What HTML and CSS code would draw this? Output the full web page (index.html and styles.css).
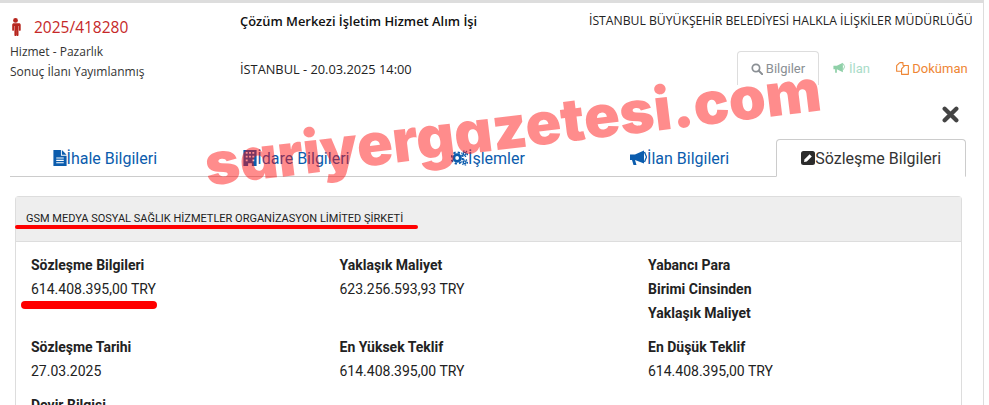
FILE: index.html
```html
<!DOCTYPE html>
<html lang="tr">
<head>
<meta charset="utf-8">
<title>2025/418280</title>
<link rel="stylesheet" href="styles.css">
</head>
<body>
<div class="frame">
  <header class="head">
    <div class="head-left">
      <div class="ikn">
        <svg class="person" viewBox="0 0 11 18"><circle cx="5.5" cy="2.4" r="2.4"/><path d="M2 5.2h7c1 0 1.7.7 1.7 1.7v5c0 .5-.4.9-.9.9s-.9-.4-.9-.9V8h-.4v9c0 .6-.4 1-1 1s-1-.4-1-1v-5h-.1v5c0 .6-.4 1-1 1s-1-.4-1-1V8h-.4v3.900c0 .5-.4.9-.9.9s-.9-.4-.9-.9v-5c0-1 .7-1.700 1.700-1.700z"/></svg>
        <span>2025/418280</span>
      </div>
      <div class="meta">Hizmet - Pazarlık</div>
      <div class="meta">Sonuç İlanı Yayımlanmış</div>
    </div>
    <div class="head-mid">
      <div class="title">Çözüm Merkezi İşletim Hizmet Alım İşi</div>
      <div class="place">İSTANBUL - 20.03.2025 14:00</div>
    </div>
    <div class="head-right">
      <div class="org">İSTANBUL BÜYÜKŞEHİR BELEDİYESİ HALKLA İLİŞKİLER MÜDÜRLÜĞÜ</div>
      <nav class="pills">
        <a class="pill pill-on">
          <svg class="pi" viewBox="0 0 14 14"><circle cx="5.800" cy="5.800" r="4.300" fill="none" stroke="currentColor" stroke-width="2"/><path d="M9 9l4 4" stroke="currentColor" stroke-width="2.400" stroke-linecap="round"/></svg>
          Bilgiler</a>
        <a class="pill pill-green">
          <svg class="pi" viewBox="0 0 15 14"><path d="M1 4.500h4l7-3.500v11L5 8.500v4H3v-4H1z" fill="#8fd0a8"/><path d="M12.500 2l1.500 3.500L12.500 9" fill="none" stroke="#8fd0a8"/></svg>
          İlan</a>
        <a class="pill pill-orange">
          <svg class="pi" viewBox="0 0 14 14"><path d="M4 .7h3.500v3M4 .7L.7 4v6H6M7.500 3.700h2L13.300 3.700v9.600H6V7.500l3.500-3.800" fill="none" stroke="currentColor" stroke-width="1.200" stroke-linejoin="round"/></svg>
          Doküman</a>
      </nav>
    </div>
  </header>

  <div class="close-row">
    <svg class="close" viewBox="0 0 16 16"><path d="M2.500 2.500l11 11M13.500 2.500l-11 11" stroke="#444" stroke-width="4" stroke-linecap="round"/></svg>
  </div>

  <nav class="tabs">
    <a class="tab">
      <svg class="ti" viewBox="0 0 14 17"><path d="M0 0h8v6h6v11H0z" fill="#0b5cad"/><path d="M9 0l5 5H9z" fill="#0b5cad"/><path d="M3 8.500h8M3 11h8M3 13.500h8" stroke="#fff" stroke-width="1.200"/></svg>İhale Bilgileri</a>
    <a class="tab">
      <svg class="ti" viewBox="0 0 14 17"><path d="M0 0h14v17H9v-3H5v3H0z" fill="#0b5cad"/><path d="M2.500 2h2v2h-2zM6 2h2v2H6zM9.500 2h2v2h-2zM2.500 6h2v2h-2zM6 6h2v2H6zM9.500 6h2v2h-2zM2.500 10h2v2h-2zM9.500 10h2v2h-2z" fill="#fff"/></svg>İdare Bilgileri</a>
    <a class="tab">
      <svg class="ti ti-w" viewBox="0 0 18 16"><g fill="none" stroke="#0b5cad"><circle cx="6.500" cy="8" r="3.500" stroke-width="3"/><circle cx="6.500" cy="8" r="6" stroke-width="2" stroke-dasharray="2.400 2.300"/><circle cx="14.500" cy="3.500" r="1.500" stroke-width="1.500"/><circle cx="14.500" cy="3.500" r="3" stroke-width="1.200" stroke-dasharray="1.500 1.500"/><circle cx="14.500" cy="12.500" r="1.500" stroke-width="1.500"/><circle cx="14.500" cy="12.500" r="3" stroke-width="1.200" stroke-dasharray="1.500 1.500"/></g></svg>İşlemler</a>
    <a class="tab">
      <svg class="ti ti-w" viewBox="0 0 17 15"><path d="M0 4h5l9-4v13L5 9.500 6.500 14.500H3.500L2 9.500H0z" fill="#0b5cad"/><path d="M14.500 1.500l2 5-2 5" fill="none" stroke="#0b5cad" stroke-width="1.300"/></svg>İlan Bilgileri</a>
    <a class="tab tab-on">
      <svg class="ti" viewBox="0 0 14 14"><rect width="14" height="14" rx="2.500" fill="#2b2b2b"/><path d="M3 11l.6-2.800 5-5 2.200 2.200-5 5z" fill="#fff"/></svg>Sözleşme Bilgileri</a>
  </nav>

  <section class="panel">
    <div class="panel-head">GSM MEDYA SOSYAL SAĞLIK HİZMETLER ORGANİZASYON LİMİTED ŞİRKETİ</div>
    <div class="panel-body">
      <div class="field"><b>Sözleşme Bilgileri</b><span>614.408.395,00 TRY</span></div>
      <div class="field"><b>Yaklaşık Maliyet</b><span>623.256.593,93 TRY</span></div>
      <div class="field"><b>Yabancı Para<br>Birimi Cinsinden<br>Yaklaşık Maliyet</b></div>
      <div class="field"><b>Sözleşme Tarihi</b><span>27.03.2025</span></div>
      <div class="field"><b>En Yüksek Teklif</b><span>614.408.395,00 TRY</span></div>
      <div class="field"><b>En Düşük Teklif</b><span>614.408.395,00 TRY</span></div>
      <div class="field"><b>Devir Bilgisi</b></div>
    </div>
  </section>
</div>

<div class="mark mark-a"></div>
<div class="mark mark-b"></div>
<div class="watermark">sariyergazetesi.com</div>
</body>
</html>
```
FILE: styles.css
```css
* { box-sizing: border-box; }
html, body { margin: 0; width: 989px; height: 405px; overflow: hidden; background: #fff; }
body { position: relative; font-family: Roboto, sans-serif; color: #222; }

.frame { width: 984px; height: 405px; border-top: 3px solid #ddd; border-right: 1px solid #ddd; padding: 0 0 0 10px; }

.head { display: flex; height: 82px; font-family: "Open Sans", sans-serif; }
.head-left { width: 230px; padding-top: 13px; }
.ikn { display: flex; align-items: center; gap: 13px; color: #c62828; font-size: 15.500px; line-height: 22px; margin-bottom: 4px; }
.person { width: 11px; height: 18px; fill: #b7261e; }
.meta { font-size: 12px; line-height: 19.500px; color: #333; }

.head-mid { width: 349px; padding-top: 9px; }
.title { font-size: 12.900px; font-weight: 600; line-height: 18px; color: #111; }
.place { font-size: 12.800px; line-height: 18px; margin-top: 30px; color: #222; }

.head-right { flex: 1; padding-top: 9px; }
.org { font-size: 12.200px; line-height: 18px; color: #222; white-space: nowrap; }
.pills { display: flex; justify-content: flex-end; margin-top: 21px; padding-right: 2px; font-family: Roboto, sans-serif; font-size: 13px; }
.pill { display: flex; align-items: center; gap: 3px; height: 34px; }
.pi { width: 12px; height: 12px; }
.pill-on { width: 82px; justify-content: center; border: 1px solid #ddd; border-bottom: 0; border-radius: 4px 4px 0 0; color: #8a8f94; }
.pill-green { width: 64px; justify-content: center; color: #a9dcc8; }
.pill-green .pi { width: 14px; }
.pill-orange { color: #ee8533; width: 98px; justify-content: center; }
.pill-orange .pi { width: 13px; height: 13px; }

.close-row { display: flex; justify-content: flex-end; height: 54px; padding: 21px 24px 0 0; }
.close { width: 17px; height: 17px; }

.tabs { display: grid; grid-template-columns: repeat(5, 1fr); gap: 2px; width: 956px; height: 38px; position: relative; }
.tabs::after { content: ""; position: absolute; left: 0; right: 0; bottom: 0; height: 1px; background: #ccc; }
.tab { display: flex; align-items: center; justify-content: center; font-size: 16px; color: #0b5cad; border: 1px solid transparent; border-radius: 4px 4px 0 0; }
.tab-on { position: relative; z-index: 1; color: #333; background: #fff; border-color: #ccc; border-bottom-color: #fff; }
.ti { width: 14px; height: 16px; flex: none; }
.ti-w { width: 17px; }
.tab-on .ti { height: 14px; }

.panel { margin: 19px 0 0 5px; width: 947px; height: 240px; border: 1px solid #ddd; border-bottom: 0; border-radius: 4px 4px 0 0; }
.panel-head { height: 45px; padding: 15px 0 0 10px; background: #eee; border-bottom: 1px solid #ddd; font-size: 11px; line-height: 14px; color: #222; }
.panel-body { display: grid; grid-template-columns: repeat(3, 308.500px); row-gap: 10px; padding: 11px 0 0 15px; font-size: 14px; line-height: 24px; }
.field b { display: block; font-weight: 700; color: #222; }
.field span { display: block; color: #222; }

.mark { position: absolute; background: #f00; border-radius: 3px; }
.mark-a { left: 15px; top: 225px; width: 403px; height: 4px; }
.mark-b { left: 21px; top: 301px; width: 136px; height: 8px; border-radius: 4px; }

.watermark { position: absolute; left: 205px; top: 128px; font-family: Inter, sans-serif; font-weight: 900; font-size: 59.200px; line-height: 74px; font-feature-settings: "cv11"; color: rgba(255, 10, 10, .47); white-space: nowrap; transform: rotate(-7deg); transform-origin: left center; }
```
